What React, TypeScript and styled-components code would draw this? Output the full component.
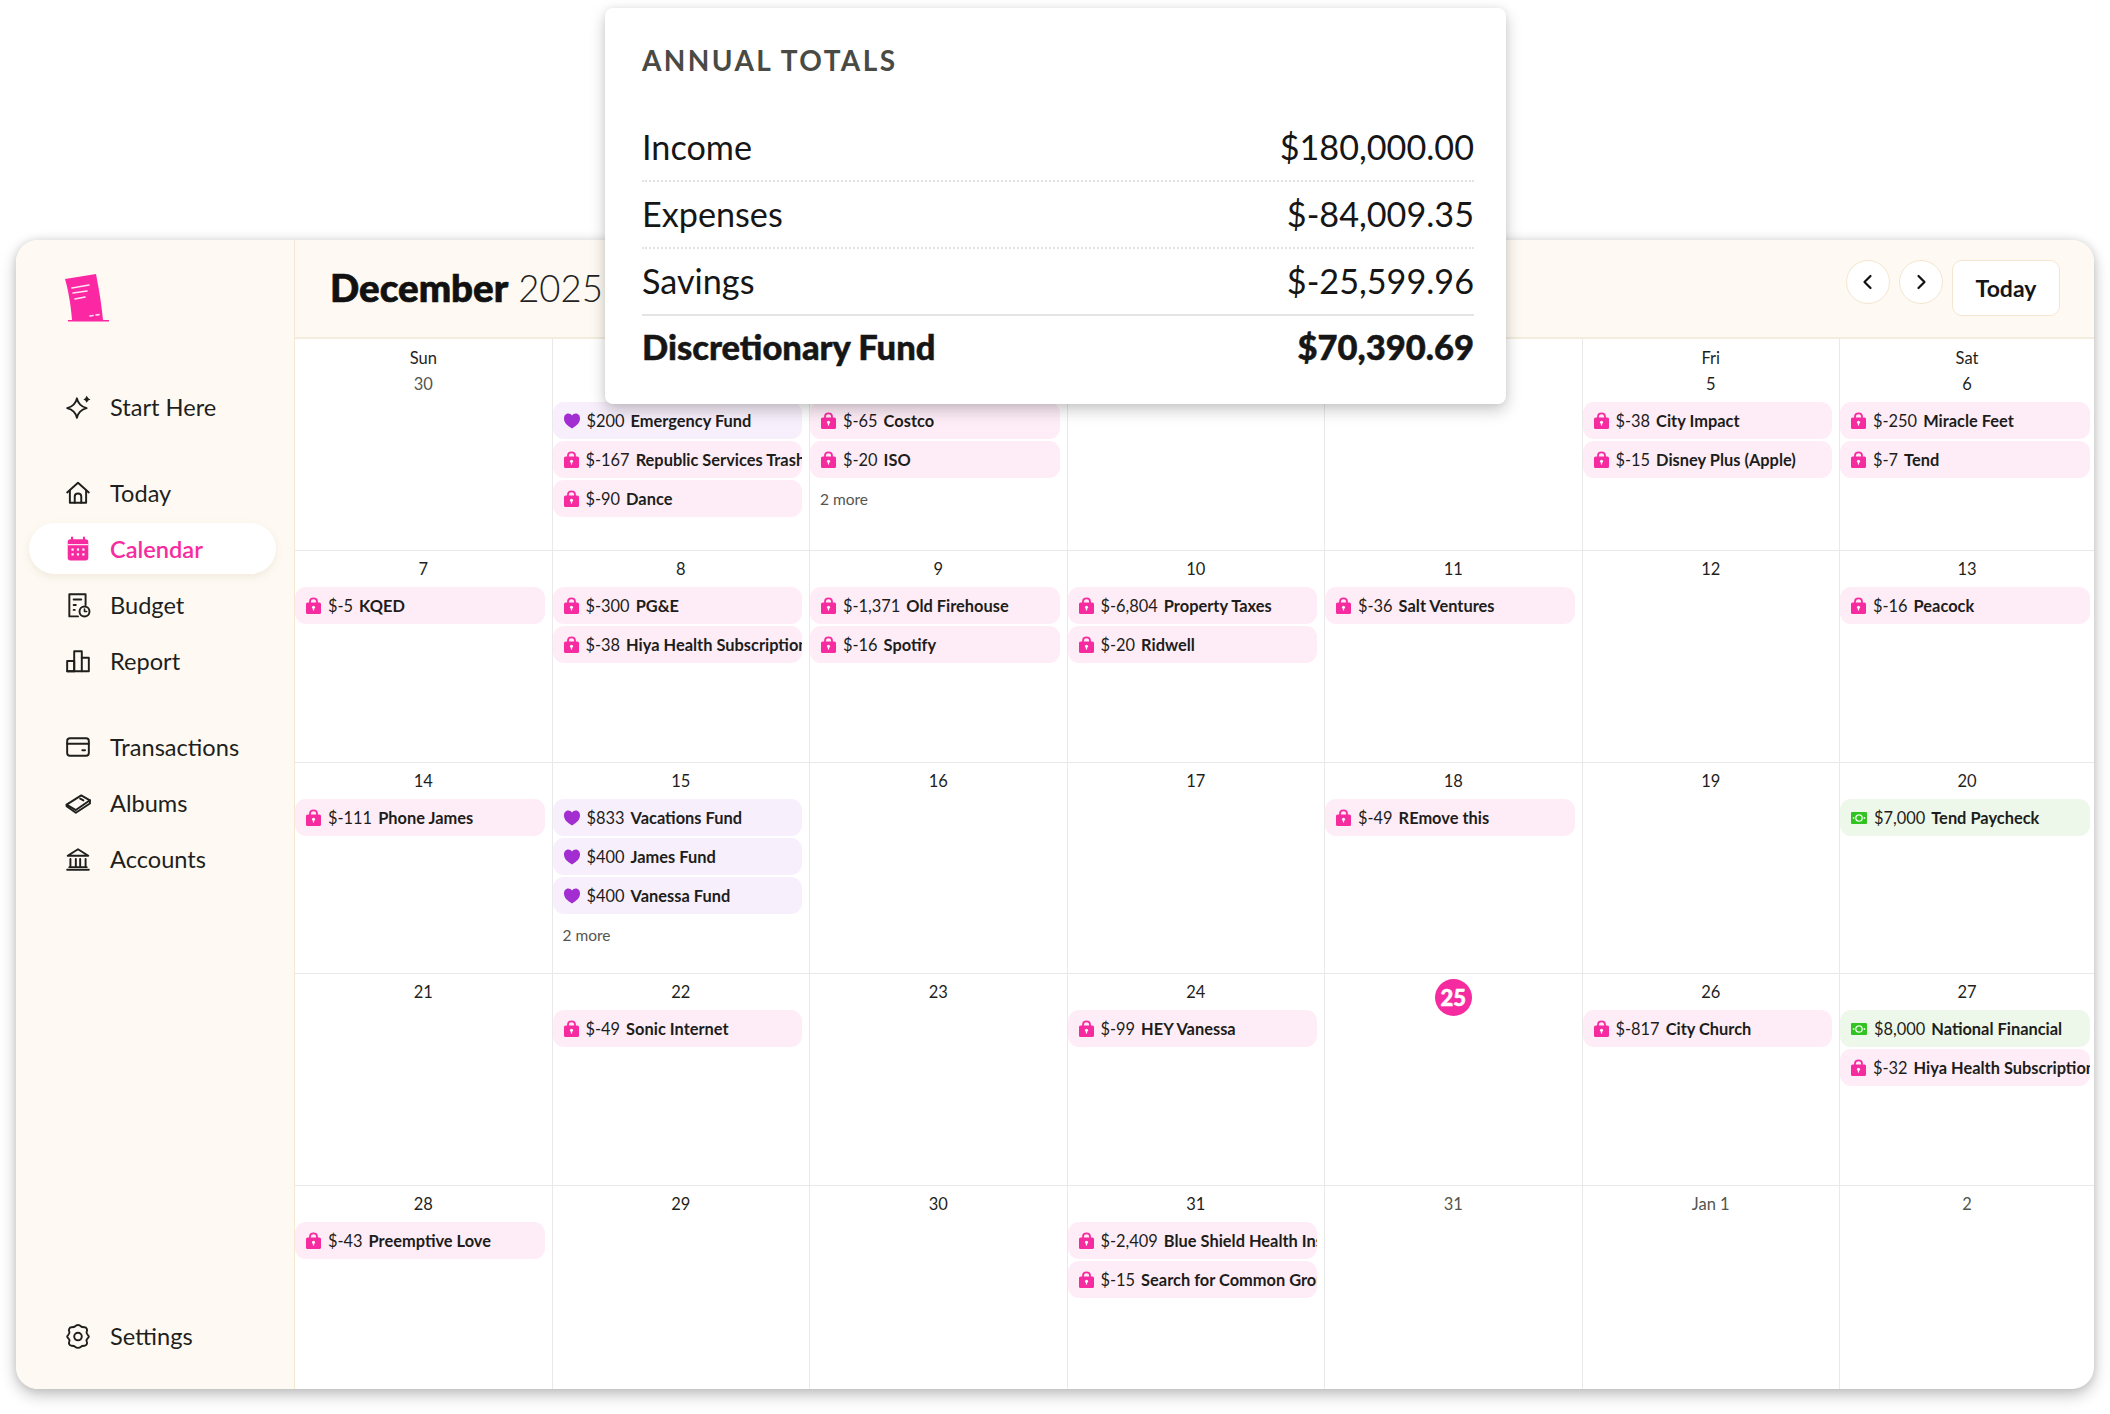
import React from 'react';
import styled, { createGlobalStyle } from 'styled-components';

const Global = createGlobalStyle`
  html, body { margin: 0; padding: 0; background: #fff; }
  body { font-family: "Lato", "Open Sans", sans-serif; color: #1c1c1a; }
  * { box-sizing: border-box; }
`;

const Page = styled.div`
  position: relative;
  width: 2110px;
  height: 1414px;
  padding: 240px 16px 0 16px;
  overflow: hidden;
`;

const Window = styled.div`
  display: flex;
  width: 2078px;
  height: 1149px;
  border-radius: 22px;
  overflow: hidden;
  background: #fff;
  box-shadow: 0 6px 16px rgba(0, 0, 0, 0.24), 0 0 8px rgba(0, 0, 0, 0.1);
`;

const Sidebar = styled.aside`
  display: flex;
  flex-direction: column;
  width: 279px;
  flex: none;
  padding: 33px 13px 28px 13px;
  background: #fefaf3;
  border-right: 1px solid #f4e8d3;
`;

const LogoWrap = styled.div`
  height: 50px;
  padding-left: 35px;
  margin-bottom: 58px;
`;

const NavGroup = styled.nav`
  display: flex;
  flex-direction: column;
  gap: 5px;
  margin-bottom: 35px;
`;

const BottomNav = styled(NavGroup)`
  margin-top: auto;
  margin-bottom: 0;
`;

const NavItem = styled.div<{ $active?: boolean }>`
  display: flex;
  align-items: center;
  gap: 19px;
  height: 51px;
  width: 247px;
  padding-left: 36px;
  border-radius: 26px;
  font-size: 23.6px;
  font-weight: ${(p) => (p.$active ? 600 : 400)};
  color: ${(p) => (p.$active ? '#f72ba0' : '#1f1f1d')};
  background: ${(p) => (p.$active ? '#fff' : 'transparent')};
  box-shadow: ${(p) => (p.$active ? '0 3px 8px rgba(120, 90, 40, 0.1)' : 'none')};
  svg { flex: none; }
`;

const Main = styled.main`
  flex: 1;
  min-width: 0;
  display: flex;
  flex-direction: column;
`;

const Header = styled.header`
  display: flex;
  justify-content: space-between;
  align-items: flex-start;
  height: 99px;
  padding: 20px 34px 0 35px;
  background: #fefaf3;
  border-bottom: 2px solid #f4ecdd;
`;

const Title = styled.h1`
  margin: 2px 0 0;
  font-size: 36.5px;
  line-height: 50px;
  font-weight: 300;
  white-space: nowrap;
  color: #222;
  strong {
    font-weight: 900;
    color: #111;
    font-size: 38.5px;
    -webkit-text-stroke: 0.7px #111;
  }
`;

const Controls = styled.div`
  display: flex;
  align-items: flex-start;
  gap: 9px;
`;

const RoundButton = styled.div`
  display: flex;
  align-items: center;
  justify-content: center;
  width: 44px;
  height: 44px;
  border-radius: 50%;
  background: #fff;
  border: 1px solid #f3e6cf;
`;

const TodayButton = styled.div`
  display: flex;
  align-items: center;
  justify-content: center;
  width: 108px;
  height: 56px;
  border-radius: 10px;
  background: #fff;
  border: 1px solid #f3e6cf;
  font-size: 23px;
  font-weight: 700;
  color: #161616;
`;

const Grid = styled.div`
  flex: 1;
  display: grid;
  grid-template-columns: 256.5px repeat(5, 257.5px) 1fr;
  grid-template-rows: 211px 212px 211px 212px 1fr;
`;

const Cell = styled.div<{ $first: boolean; $top: boolean }>`
  min-width: 0;
  padding-top: ${(p) => (p.$top ? '6px' : '5px')};
  border-left: ${(p) => (p.$first ? 'none' : '1px solid #e9e9e9')};
  border-top: ${(p) => (p.$top ? 'none' : '1px solid #e9e9e9')};
`;

const DayLabel = styled.div<{ $muted?: boolean }>`
  height: 26px;
  line-height: 26px;
  text-align: center;
  font-size: 16.5px;
  color: ${(p) => (p.$muted ? '#55554f' : '#1f1f1d')};
`;

const TodayRow = styled.div`
  display: flex;
  justify-content: center;
  height: 26px;
`;

const TodayBadge = styled.div`
  display: flex;
  align-items: center;
  justify-content: center;
  width: 37px;
  height: 37px;
  border-radius: 50%;
  background: #f72ba0;
  color: #fff;
  font-size: 22px;
  font-weight: 900;
  -webkit-text-stroke: 0.5px #fff;
`;

const Chips = styled.div<{ $last: boolean }>`
  display: flex;
  flex-direction: column;
  gap: 2px;
  margin-top: 5px;
  padding-right: ${(p) => (p.$last ? '4px' : '7px')};
`;

const chipColors = {
  lock: '#feedf7',
  heart: '#f7effb',
  cash: '#eef8ea',
};

const Chip = styled.div<{ $kind: keyof typeof chipColors }>`
  display: flex;
  align-items: center;
  gap: 7px;
  height: 37px;
  padding-left: 11px;
  border-radius: 11px;
  background: ${(p) => chipColors[p.$kind]};
  font-size: 16.4px;
  white-space: nowrap;
  overflow: hidden;
  color: #1d1d1b;
  svg { flex: none; }
`;

const Amount = styled.span`
  margin-right: 6px;
  font-weight: 400;
`;

const Name = styled.span`
  font-weight: 700;
`;

const More = styled.div`
  height: 39px;
  line-height: 39px;
  padding-left: 10px;
  font-size: 15.5px;
  color: #55554f;
`;

const TotalsCard = styled.section`
  position: absolute;
  left: 605px;
  top: 8px;
  width: 901px;
  height: 396px;
  padding: 36px 32px 0 37px;
  border-radius: 8px;
  background: #fff;
  box-shadow: 0 6px 16px rgba(0, 0, 0, 0.22), 0 0 6px rgba(0, 0, 0, 0.06);
`;

const TotalsTitle = styled.h2`
  margin: 0 0 39px;
  font-size: 28px;
  line-height: 32px;
  font-weight: 700;
  letter-spacing: 2.4px;
  color: #4a4a45;
`;

const TotalsRow = styled.div<{ $line?: 'dotted' | 'solid' }>`
  display: flex;
  justify-content: space-between;
  align-items: center;
  height: 67px;
  padding-bottom: 2px;
  font-size: 34.2px;
  color: #161616;
  border-bottom: ${(p) =>
    p.$line === 'solid' ? '2px solid #e4e4e4' : p.$line === 'dotted' ? '2px dotted #e2e2e2' : 'none'};
`;

const TotalsStrong = styled(TotalsRow)`
  height: 63px;
  font-weight: 900;
  font-size: 34.5px;
  -webkit-text-stroke: 0.5px #161616;
`;

const Ico = ({ children, size = 26 }: { children: React.ReactNode; size?: number }) => (
  <svg width={size} height={size} viewBox="0 0 24 24" fill="none" stroke="#1f1f1d" strokeWidth="1.8" strokeLinecap="round" strokeLinejoin="round">
    {children}
  </svg>
);

const Logo = () => (
  <svg width="46" height="50" viewBox="0 0 46 50">
    <path d="M1 6 L32 1 C34 12 37 26 39 47 L45 47 L45 48.5 L4 48.5 L4 47 L8 47 C7 32 4 16 1 6 Z" fill="#fb27a3" />
    <g stroke="#ffe4f3" strokeWidth="1.6" strokeLinecap="round">
      <path d="M8 15 L25 12" />
      <path d="M9 20 L23 18" />
      <path d="M11 26 L21 24" />
      <path d="M26 43 L29 42.5" />
      <path d="M32 42 L35 41.6" />
    </g>
  </svg>
);

const SparkIcon = () => (
  <Ico>
    <path d="M11 4 C12 9 14.5 11.5 20 13 C14.5 14.5 12 17 11 22 C10 17 7.5 14.5 2 13 C7.5 11.5 10 9 11 4 Z" />
    <path d="M20 1.5 L21.5 4 L23.5 5 L21.5 6 L20 8 L18.7 6 L17 5 L18.7 4 Z" fill="#1f1f1d" stroke="none" />
  </Ico>
);
const HomeIcon = () => (
  <Ico>
    <path d="M2 11.5 L12 2.5 L22 11.5" />
    <path d="M4.5 10 V21 H19.5 V10" />
    <path d="M9 21 V15 C9 11.5 15 11.5 15 15 V21" />
  </Ico>
);
const CalendarIcon = () => (
  <svg width="26" height="26" viewBox="0 0 24 24">
    <rect x="2.5" y="3" width="19" height="19.5" rx="2.5" fill="#f72ba0" />
    <path d="M6.5 1.5 V5 M17.5 1.5 V5" stroke="#f72ba0" strokeWidth="2" strokeLinecap="round" />
    <path d="M2.5 8 H21.5" stroke="#fff" strokeWidth="1" />
    <g fill="#fff">
      <rect x="6" y="11.5" width="2" height="2" /><rect x="11" y="11.5" width="2" height="2" /><rect x="16" y="11.5" width="2" height="2" />
      <rect x="6" y="16" width="2" height="2" /><rect x="11" y="16" width="2" height="2" /><rect x="16" y="16" width="2" height="2" />
    </g>
  </svg>
);
const BudgetIcon = () => (
  <Ico>
    <path d="M12 22.5 H4 V2 H19 V12" />
    <path d="M8 7 H15 M8 12 H10 M8 16.5 H9" />
    <circle cx="18" cy="18" r="4.6" />
    <path d="M18 15.8 V18 H20" strokeWidth="1.5" />
  </Ico>
);
const ReportIcon = () => (
  <Ico>
    <path d="M2 21.5 V12 H8.5 V21.5 Z" />
    <path d="M8.5 21.5 V3 H15.5 V21.5" />
    <path d="M15.5 9 H22 V21.5 H2" />
  </Ico>
);
const WalletIcon = () => (
  <Ico>
    <rect x="2" y="4" width="20" height="16" rx="2.5" />
    <path d="M2 9 H22" />
    <path d="M16 15 H18.5" />
  </Ico>
);
const AlbumIcon = () => (
  <Ico>
    <path d="M1.5 13.5 L15 5 L23 9.5 L10 18.5 Z" />
    <path d="M1.5 13.5 V15 L10 21 L23 12.5 V9.5" />
    <path d="M14 8 L17 9.6" />
  </Ico>
);
const BankIcon = () => (
  <Ico>
    <path d="M2.5 9 L12 3 L21.5 9 Z" />
    <path d="M5 12 V19 M10 12 V19 M14 12 V19 M19 12 V19" />
    <path d="M2 22 H22 M4 19.5 H20" />
  </Ico>
);
const GearIcon = () => (
  <Ico>
    <path d="M9.5 3 C10.5 1.5 13.5 1.5 14.5 3 C15.5 4 16.5 4 18 4 C20 4 21 6.5 20 8 C19.5 9 20 10 21 11 C22.3 12 22.3 13 21 14 C20 15 19.5 16 20 17 C21 18.5 20 21 18 21 C16.5 21 15.5 21 14.5 22 C13.5 23.3 10.5 23.3 9.5 22 C8.5 21 7.5 21 6 21 C4 21 3 18.5 4 17 C4.5 16 4 15 3 14 C1.7 13 1.7 12 3 11 C4 10 4.5 9 4 8 C3 6.5 4 4 6 4 C7.5 4 8.5 4 9.5 3 Z" />
    <circle cx="12" cy="12.5" r="3.5" />
  </Ico>
);
const ChevLeft = () => (
  <svg width="20" height="20" viewBox="0 0 20 20" fill="none" stroke="#111" strokeWidth="2.2" strokeLinecap="round" strokeLinejoin="round"><path d="M12.5 4 L6.5 10 L12.5 16" /></svg>
);
const ChevRight = () => (
  <svg width="20" height="20" viewBox="0 0 20 20" fill="none" stroke="#111" strokeWidth="2.2" strokeLinecap="round" strokeLinejoin="round"><path d="M7.5 4 L13.5 10 L7.5 16" /></svg>
);

const LockIcon = () => (
  <svg width="15" height="17" viewBox="0 0 15 17">
    <path d="M4 6 V4.5 C4 0.3 11 0.3 11 4.5 V6" fill="none" stroke="#f72ba0" strokeWidth="1.8" />
    <rect x="0" y="5.5" width="15" height="11.5" rx="1.6" fill="#f72ba0" />
    <circle cx="7.5" cy="10.2" r="1.5" fill="#fff" />
    <rect x="6.9" y="10.5" width="1.2" height="3" fill="#fff" />
  </svg>
);
const HeartIcon = () => (
  <svg width="16" height="16" viewBox="0 0 16 16">
    <path d="M8 15.5 C3 12.5 0 9.5 0 5.5 C0 2 2.3 0.6 4.2 0.6 C6 0.6 7.2 1.4 8 2.6 C8.8 1.4 10 0.6 11.8 0.6 C13.7 0.6 16 2 16 5.5 C16 9.5 13 12.5 8 15.5 Z" fill="#a22ed1" />
  </svg>
);
const CashIcon = () => (
  <svg width="16" height="12" viewBox="0 0 16 12">
    <rect width="16" height="12" rx="1" fill="#2fc41f" />
    <circle cx="8" cy="6" r="3.2" fill="none" stroke="#eef8ea" strokeWidth="1.3" />
    <circle cx="2.6" cy="6" r="0.9" fill="#eef8ea" />
    <circle cx="13.4" cy="6" r="0.9" fill="#eef8ea" />
  </svg>
);

type ChipData = { k: keyof typeof chipColors; a: string; n: string };
type CellData = { label?: string; date: string; muted?: boolean; today?: boolean; chips?: ChipData[]; more?: string };

const L = (a: string, n: string): ChipData => ({ k: 'lock', a, n });
const H = (a: string, n: string): ChipData => ({ k: 'heart', a, n });
const C = (a: string, n: string): ChipData => ({ k: 'cash', a, n });

const cells: CellData[] = [
  { label: 'Sun', date: '30', muted: true },
  { label: 'Mon', date: '1', chips: [H('$200', 'Emergency Fund'), L('$-167', 'Republic Services Trash'), L('$-90', 'Dance')] },
  { label: 'Tue', date: '2', chips: [L('$-65', 'Costco'), L('$-20', 'ISO')], more: '2 more' },
  { label: 'Wed', date: '3' },
  { label: 'Thu', date: '4' },
  { label: 'Fri', date: '5', chips: [L('$-38', 'City Impact'), L('$-15', 'Disney Plus (Apple)')] },
  { label: 'Sat', date: '6', chips: [L('$-250', 'Miracle Feet'), L('$-7', 'Tend')] },
  { date: '7', chips: [L('$-5', 'KQED')] },
  { date: '8', chips: [L('$-300', 'PG&E'), L('$-38', 'Hiya Health Subscription')] },
  { date: '9', chips: [L('$-1,371', 'Old Firehouse'), L('$-16', 'Spotify')] },
  { date: '10', chips: [L('$-6,804', 'Property Taxes'), L('$-20', 'Ridwell')] },
  { date: '11', chips: [L('$-36', 'Salt Ventures')] },
  { date: '12' },
  { date: '13', chips: [L('$-16', 'Peacock')] },
  { date: '14', chips: [L('$-111', 'Phone James')] },
  { date: '15', chips: [H('$833', 'Vacations Fund'), H('$400', 'James Fund'), H('$400', 'Vanessa Fund')], more: '2 more' },
  { date: '16' },
  { date: '17' },
  { date: '18', chips: [L('$-49', 'REmove this')] },
  { date: '19' },
  { date: '20', chips: [C('$7,000', 'Tend Paycheck')] },
  { date: '21' },
  { date: '22', chips: [L('$-49', 'Sonic Internet')] },
  { date: '23' },
  { date: '24', chips: [L('$-99', 'HEY Vanessa')] },
  { date: '25', today: true },
  { date: '26', chips: [L('$-817', 'City Church')] },
  { date: '27', chips: [C('$8,000', 'National Financial'), L('$-32', 'Hiya Health Subscription')] },
  { date: '28', chips: [L('$-43', 'Preemptive Love')] },
  { date: '29' },
  { date: '30' },
  { date: '31', chips: [L('$-2,409', 'Blue Shield Health Insurance'), L('$-15', 'Search for Common Ground')] },
  { date: '31', muted: true },
  { date: 'Jan 1', muted: true },
  { date: '2', muted: true },
];

const chipIcon = { lock: <LockIcon />, heart: <HeartIcon />, cash: <CashIcon /> };

export default function App() {
  return (
    <Page>
      <Global />
      <Window>
        <Sidebar>
          <LogoWrap><Logo /></LogoWrap>
          <NavGroup>
            <NavItem><SparkIcon />Start Here</NavItem>
          </NavGroup>
          <NavGroup>
            <NavItem><HomeIcon />Today</NavItem>
            <NavItem $active><CalendarIcon />Calendar</NavItem>
            <NavItem><BudgetIcon />Budget</NavItem>
            <NavItem><ReportIcon />Report</NavItem>
          </NavGroup>
          <NavGroup>
            <NavItem><WalletIcon />Transactions</NavItem>
            <NavItem><AlbumIcon />Albums</NavItem>
            <NavItem><BankIcon />Accounts</NavItem>
          </NavGroup>
          <BottomNav>
            <NavItem><GearIcon />Settings</NavItem>
          </BottomNav>
        </Sidebar>
        <Main>
          <Header>
            <Title><strong>December</strong> 2025</Title>
            <Controls>
              <RoundButton><ChevLeft /></RoundButton>
              <RoundButton><ChevRight /></RoundButton>
              <TodayButton>Today</TodayButton>
            </Controls>
          </Header>
          <Grid>
            {cells.map((c, i) => (
              <Cell key={i} $first={i % 7 === 0} $top={i < 7}>
                {c.label && <DayLabel>{c.label}</DayLabel>}
                {c.today ? (
                  <TodayRow><TodayBadge>{c.date}</TodayBadge></TodayRow>
                ) : (
                  <DayLabel $muted={c.muted}>{c.date}</DayLabel>
                )}
                {(c.chips || c.more) && (
                  <Chips $last={i % 7 === 6}>
                    {c.chips?.map((ch) => (
                      <Chip key={ch.n} $kind={ch.k}>
                        {chipIcon[ch.k]}
                        <span><Amount>{ch.a}</Amount><Name>{ch.n}</Name></span>
                      </Chip>
                    ))}
                    {c.more && <More>{c.more}</More>}
                  </Chips>
                )}
              </Cell>
            ))}
          </Grid>
        </Main>
      </Window>
      <TotalsCard>
        <TotalsTitle>ANNUAL TOTALS</TotalsTitle>
        <TotalsRow $line="dotted"><span>Income</span><span>$180,000.00</span></TotalsRow>
        <TotalsRow $line="dotted"><span>Expenses</span><span>$-84,009.35</span></TotalsRow>
        <TotalsRow $line="solid"><span>Savings</span><span>$-25,599.96</span></TotalsRow>
        <TotalsStrong><span>Discretionary Fund</span><span>$70,390.69</span></TotalsStrong>
      </TotalsCard>
    </Page>
  );
}
